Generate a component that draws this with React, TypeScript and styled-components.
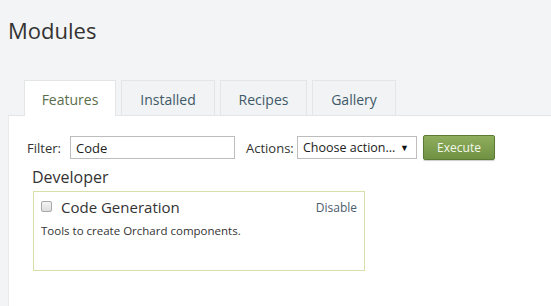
import React from "react";
import styled, { createGlobalStyle } from "styled-components";

const GlobalStyle = createGlobalStyle`
  html, body {
    margin: 0;
    padding: 0;
    background: #f3f4f5;
    font-family: "Open Sans", "Noto Sans", sans-serif;
    color: #333;
  }
`;

const Page = styled.div`
  width: 551px;
  height: 306px;
  overflow: hidden;
  padding-left: 8px;
  box-sizing: border-box;
`;

const Title = styled.h1`
  margin: 0;
  padding: 15px 0 0 0;
  height: 63px;
  box-sizing: border-box;
  font-size: 22px;
  font-weight: 400;
  color: #333;
`;

const TabBar = styled.div`
  display: flex;
  gap: 5px;
  padding-left: 16px;
  height: 52px;
  align-items: flex-end;
`;

const Tab = styled.div<{ active?: boolean; w: number }>`
  width: ${({ w }) => w}px;
  box-sizing: border-box;
  display: flex;
  align-items: center;
  justify-content: center;
  padding-top: 2px;
  font-size: 14px;
  border: 1px solid #e3e6e7;
  border-bottom: none;
  background: ${({ active }) => (active ? "#fff" : "#f1f3f4")};
  color: ${({ active }) => (active ? "#5b6e4c" : "#3f5968")};
  margin-bottom: ${({ active }) => (active ? "-1px" : "0")};
  height: ${({ active }) => (active ? "36px" : "35px")};
  position: relative;
  z-index: 1;
`;

const Panel = styled.div`
  background: #fff;
  border-top: 1px solid #e3e6e7;
  border-left: 1px solid #e8eaeb;
  height: 200px;
  padding: 19px 0 0 18px;
  box-sizing: border-box;
`;

const Toolbar = styled.div`
  display: flex;
  align-items: center;
  font-size: 13px;
  color: #333;
`;

const Label = styled.span<{ ml?: number; w: number }>`
  margin-left: ${({ ml }) => ml ?? 0}px;
  width: ${({ w }) => w}px;
  font-size: 13px;
`;

const TextInput = styled.div<{ w: number }>`
  width: ${({ w }) => w}px;
  height: 23px;
  box-sizing: border-box;
  border: 1px solid #bdbdbd;
  padding: 0 5px;
  display: flex;
  align-items: center;
  font-size: 13px;
  color: #222;
  background: #fff;
`;

const Select = styled(TextInput)`
  justify-content: space-between;
  padding-right: 7px;
  font-size: 12.5px;
`;

const Arrow = styled.span`
  font-size: 9px;
  color: #111;
`;

const ExecuteButton = styled.button`
  margin-left: 6px;
  width: 72px;
  height: 25px;
  border: 1px solid #5c7a34;
  border-radius: 2px;
  background: linear-gradient(#8fae5e, #6f9142);
  color: #f4f8ec;
  font-family: "Open Sans", "Noto Sans", sans-serif;
  font-size: 12px;
  box-shadow: 0 1px 1px rgba(0, 0, 0, 0.2);
  padding: 0;
`;

const Section = styled.div`
  margin-left: 6px;
`;

const Group = styled.div`
  margin-top: 6px;
  margin-left: -1px;
  font-size: 16px;
  color: #333;
  line-height: 22px;
`;

const FeatureBox = styled.div`
  margin-top: 3px;
  width: 332px;
  height: 80px;
  box-sizing: border-box;
  border: 1px solid #d9dfaa;
  padding: 5px 6px 0 7px;
`;

const FeatureHead = styled.div`
  display: flex;
  align-items: center;
  justify-content: space-between;
`;

const FeatureName = styled.label`
  display: flex;
  align-items: center;
  font-size: 15px;
  color: #333;
`;

const Check = styled.span`
  width: 11px;
  height: 11px;
  box-sizing: border-box;
  border: 1px solid #a8a8a8;
  border-radius: 2px;
  background: linear-gradient(#f4f4f4, #dedede);
  margin-right: 9px;
  margin-top: -2px;
`;

const DisableLink = styled.a`
  font-size: 12px;
  color: #4a5d6e;
  text-decoration: none;
  margin-right: 1px;
`;

const Description = styled.div`
  margin-top: 6px;
  font-size: 11.5px;
  color: #333;
`;

export default function App() {
  return (
    <Page>
      <GlobalStyle />
      <Title>Modules</Title>
      <TabBar>
        <Tab active w={92}>Features</Tab>
        <Tab w={94}>Installed</Tab>
        <Tab w={87}>Recipes</Tab>
        <Tab w={84}>Gallery</Tab>
      </TabBar>
      <Panel>
        <Toolbar>
          <Label w={43}>Filter:</Label>
          <TextInput w={165}>Code</TextInput>
          <Label ml={11} w={51}>Actions:</Label>
          <Select w={120}>
            Choose action...
            <Arrow>▼</Arrow>
          </Select>
          <ExecuteButton>Execute</ExecuteButton>
        </Toolbar>
        <Section>
          <Group>Developer</Group>
          <FeatureBox>
            <FeatureHead>
              <FeatureName>
                <Check />
                Code Generation
              </FeatureName>
              <DisableLink href="#">Disable</DisableLink>
            </FeatureHead>
            <Description>Tools to create Orchard components.</Description>
          </FeatureBox>
        </Section>
      </Panel>
    </Page>
  );
}
